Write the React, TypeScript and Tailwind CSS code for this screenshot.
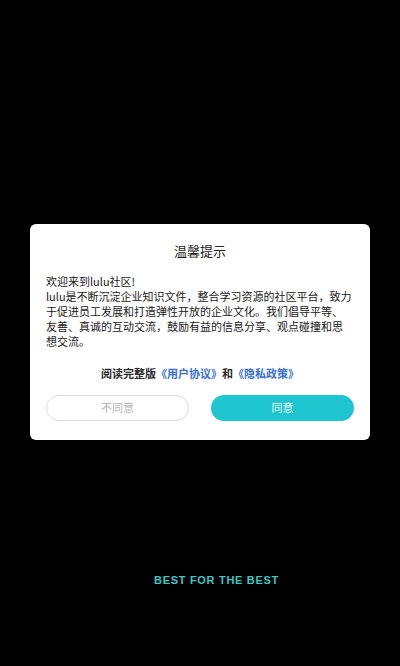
import React from 'react'

const cjk = "font-['Noto_Sans_CJK_SC','Noto_Sans',sans-serif]"

export default function App() {
  const lines = [
    '欢迎来到lulu社区!',
    'lulu是不断沉淀企业知识文件，整合学习资源的社区平台，致力',
    '于促进员工发展和打造弹性开放的企业文化。我们倡导平等、',
    '友善、真诚的互动交流，鼓励有益的信息分享、观点碰撞和思',
    '想交流。',
  ]

  return (
    <div className={`relative h-[666px] w-full overflow-hidden bg-black ${cjk}`}>
      {/* splash background */}
      <div className="flex h-full flex-col items-center justify-end pb-[79px] pl-[33px]">
        <span className="font-['Liberation_Sans',sans-serif] text-[11px] font-bold leading-[14px] tracking-[0.7px] text-[#3fc6c2]">
          BEST FOR THE BEST
        </span>
      </div>

      {/* dialog */}
      <div className="absolute inset-0 flex items-center justify-center">
        <div className="mb-[3px] w-[340px] rounded-[6px] bg-white px-4 pb-[19px] pt-[18px]">
          <h2 className="text-center text-[13px] leading-[18px] text-[#222]">温馨提示</h2>

          <p className="mt-[14px] text-[11px] leading-[15px] text-[#1a1a1a]">
            {lines.map((l) => (
              <span key={l} className="block whitespace-nowrap">
                {l}
              </span>
            ))}
          </p>

          <p className="mt-[17px] text-center text-[11px] font-semibold leading-[15px] text-[#2a2a2a]">
            阅读完整版<span className="text-[#3a6fd8]">《用户协议》</span>和<span className="text-[#3a6fd8]">《隐私政策》</span>
          </p>

          <div className="mt-[14px] flex justify-between">
            <button className="h-[26px] w-[143px] rounded-full border border-[#dcdcdc] text-[11px] text-[#b8b8b8]">
              不同意
            </button>
            <button className="h-[26px] w-[143px] rounded-full bg-[#1fc6d0] text-[11px] text-[#e6fafb]">
              同意
            </button>
          </div>
        </div>
      </div>
    </div>
  )
}
